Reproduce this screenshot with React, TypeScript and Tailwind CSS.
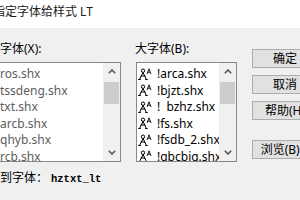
import React from "react";

const leftItems = ["ros.shx", "tssdeng.shx", "txt.shx", "arcb.shx", "qhyb.shx", "rcb.shx"];
const rightItems = ["!arca.shx", "!bjzt.shx", "!  bzhz.shx", "!fs.shx", "!fsdb_2.shx", "!gbcbig.shx"];

function FontIcon() {
  return (
    <svg width="14" height="13" viewBox="0 0 14 13" className="shrink-0">
      <g fill="none" stroke="#000" strokeWidth="1">
        <circle cx="5" cy="2.7" r="1.7" />
        <path d="M5 4.5 L1.8 11 M5 4.5 L8.2 11 M2.6 8 H7.4 M0.3 11.5 H2.8 M7.2 11.5 H9.7" />
        <path d="M9 6 L11 0.8 L13 6 M9.8 4.2 H12.2" strokeWidth="0.9" />
      </g>
    </svg>
  );
}

function Chevron({ up }: { up?: boolean }) {
  return (
    <svg width="8" height="5" viewBox="0 0 8 5">
      <path
        d={up ? "M0.8 4.3 L4 1 L7.2 4.3" : "M0.8 0.7 L4 4 L7.2 0.7"}
        fill="none"
        stroke="#505050"
        strokeWidth="1.5"
      />
    </svg>
  );
}

function ScrollBar() {
  return (
    <div className="w-[17px] h-full bg-[#f0f0f0] flex flex-col shrink-0">
      <div className="h-[17px] flex items-center justify-center">
        <Chevron up />
      </div>
      <div className="mx-[1px] mt-[2px] h-[22px] bg-[#cdcdcd]" />
      <div className="flex-1" />
      <div className="h-[17px] flex items-center justify-center">
        <Chevron />
      </div>
    </div>
  );
}

function Btn({ label }: { label: string }) {
  return (
    <div className="w-[66px] h-[19px] bg-[#e1e1e1] border border-[#adadad] flex items-center justify-center text-[12px] leading-[17px] text-black whitespace-nowrap">
      {label}
    </div>
  );
}

export default function App() {
  return (
    <div
      className="w-[300px] h-[200px] bg-[#f0f0f0] overflow-hidden text-black"
      style={{ fontFamily: '"Noto Sans", "Noto Sans CJK SC", sans-serif' }}
    >
      <div className="h-[28px] bg-white pt-[4px]">
        <div className="ml-[-7px] text-[12px] leading-[16px] text-[#222] whitespace-nowrap">指定字体给样式 LT</div>
      </div>
      <div className="flex pt-[13px]">
        <div className="ml-[-20px] w-[141px] shrink-0 flex flex-col">
          <div className="pl-[20px] text-[12px] leading-[16px] whitespace-nowrap">字体(X):</div>
          <div className="mt-[5px] h-[100px] border border-[#828790] bg-white flex">
            <div className="flex-1 pt-[3px] pl-[19px] overflow-hidden">
              {leftItems.map((t) => (
                <div key={t} className="h-[16.5px] leading-[16.5px] text-[12px] text-[#5c5c5c] whitespace-nowrap">
                  {t}
                </div>
              ))}
            </div>
            <ScrollBar />
          </div>
        </div>
        <div className="ml-[14px] w-[102px] shrink-0 flex flex-col">
          <div className="text-[12px] leading-[16px] whitespace-nowrap">大字体(B):</div>
          <div className="mt-[5px] ml-[1px] h-[100px] border border-[#828790] bg-white flex">
            <div className="flex-1 pt-[3px] pl-[1px] overflow-hidden">
              {rightItems.map((t) => (
                <div key={t} className="h-[16.5px] flex items-center gap-[5px] whitespace-nowrap">
                  <FontIcon />
                  <span className="text-[12px] leading-[16.5px] whitespace-pre">{t}</span>
                </div>
              ))}
            </div>
            <ScrollBar />
          </div>
        </div>
        <div className="ml-[15px] mt-[8px] flex flex-col shrink-0">
          <Btn label="确定" />
          <div className="mt-[7px]">
            <Btn label="取消" />
          </div>
          <div className="mt-[7px]">
            <Btn label="帮助(H)" />
          </div>
          <div className="mt-[20px]">
            <Btn label="浏览(B)..." />
          </div>
        </div>
      </div>
      <div className="mt-[8px] flex items-baseline whitespace-nowrap">
        <span className="text-[12px] leading-[16px]">到字体：</span>
        <span
          className="ml-[3px] text-[10.5px] font-bold leading-[16px]"
          style={{ fontFamily: '"Liberation Mono", monospace' }}
        >
          hztxt_lt
        </span>
      </div>
    </div>
  );
}
